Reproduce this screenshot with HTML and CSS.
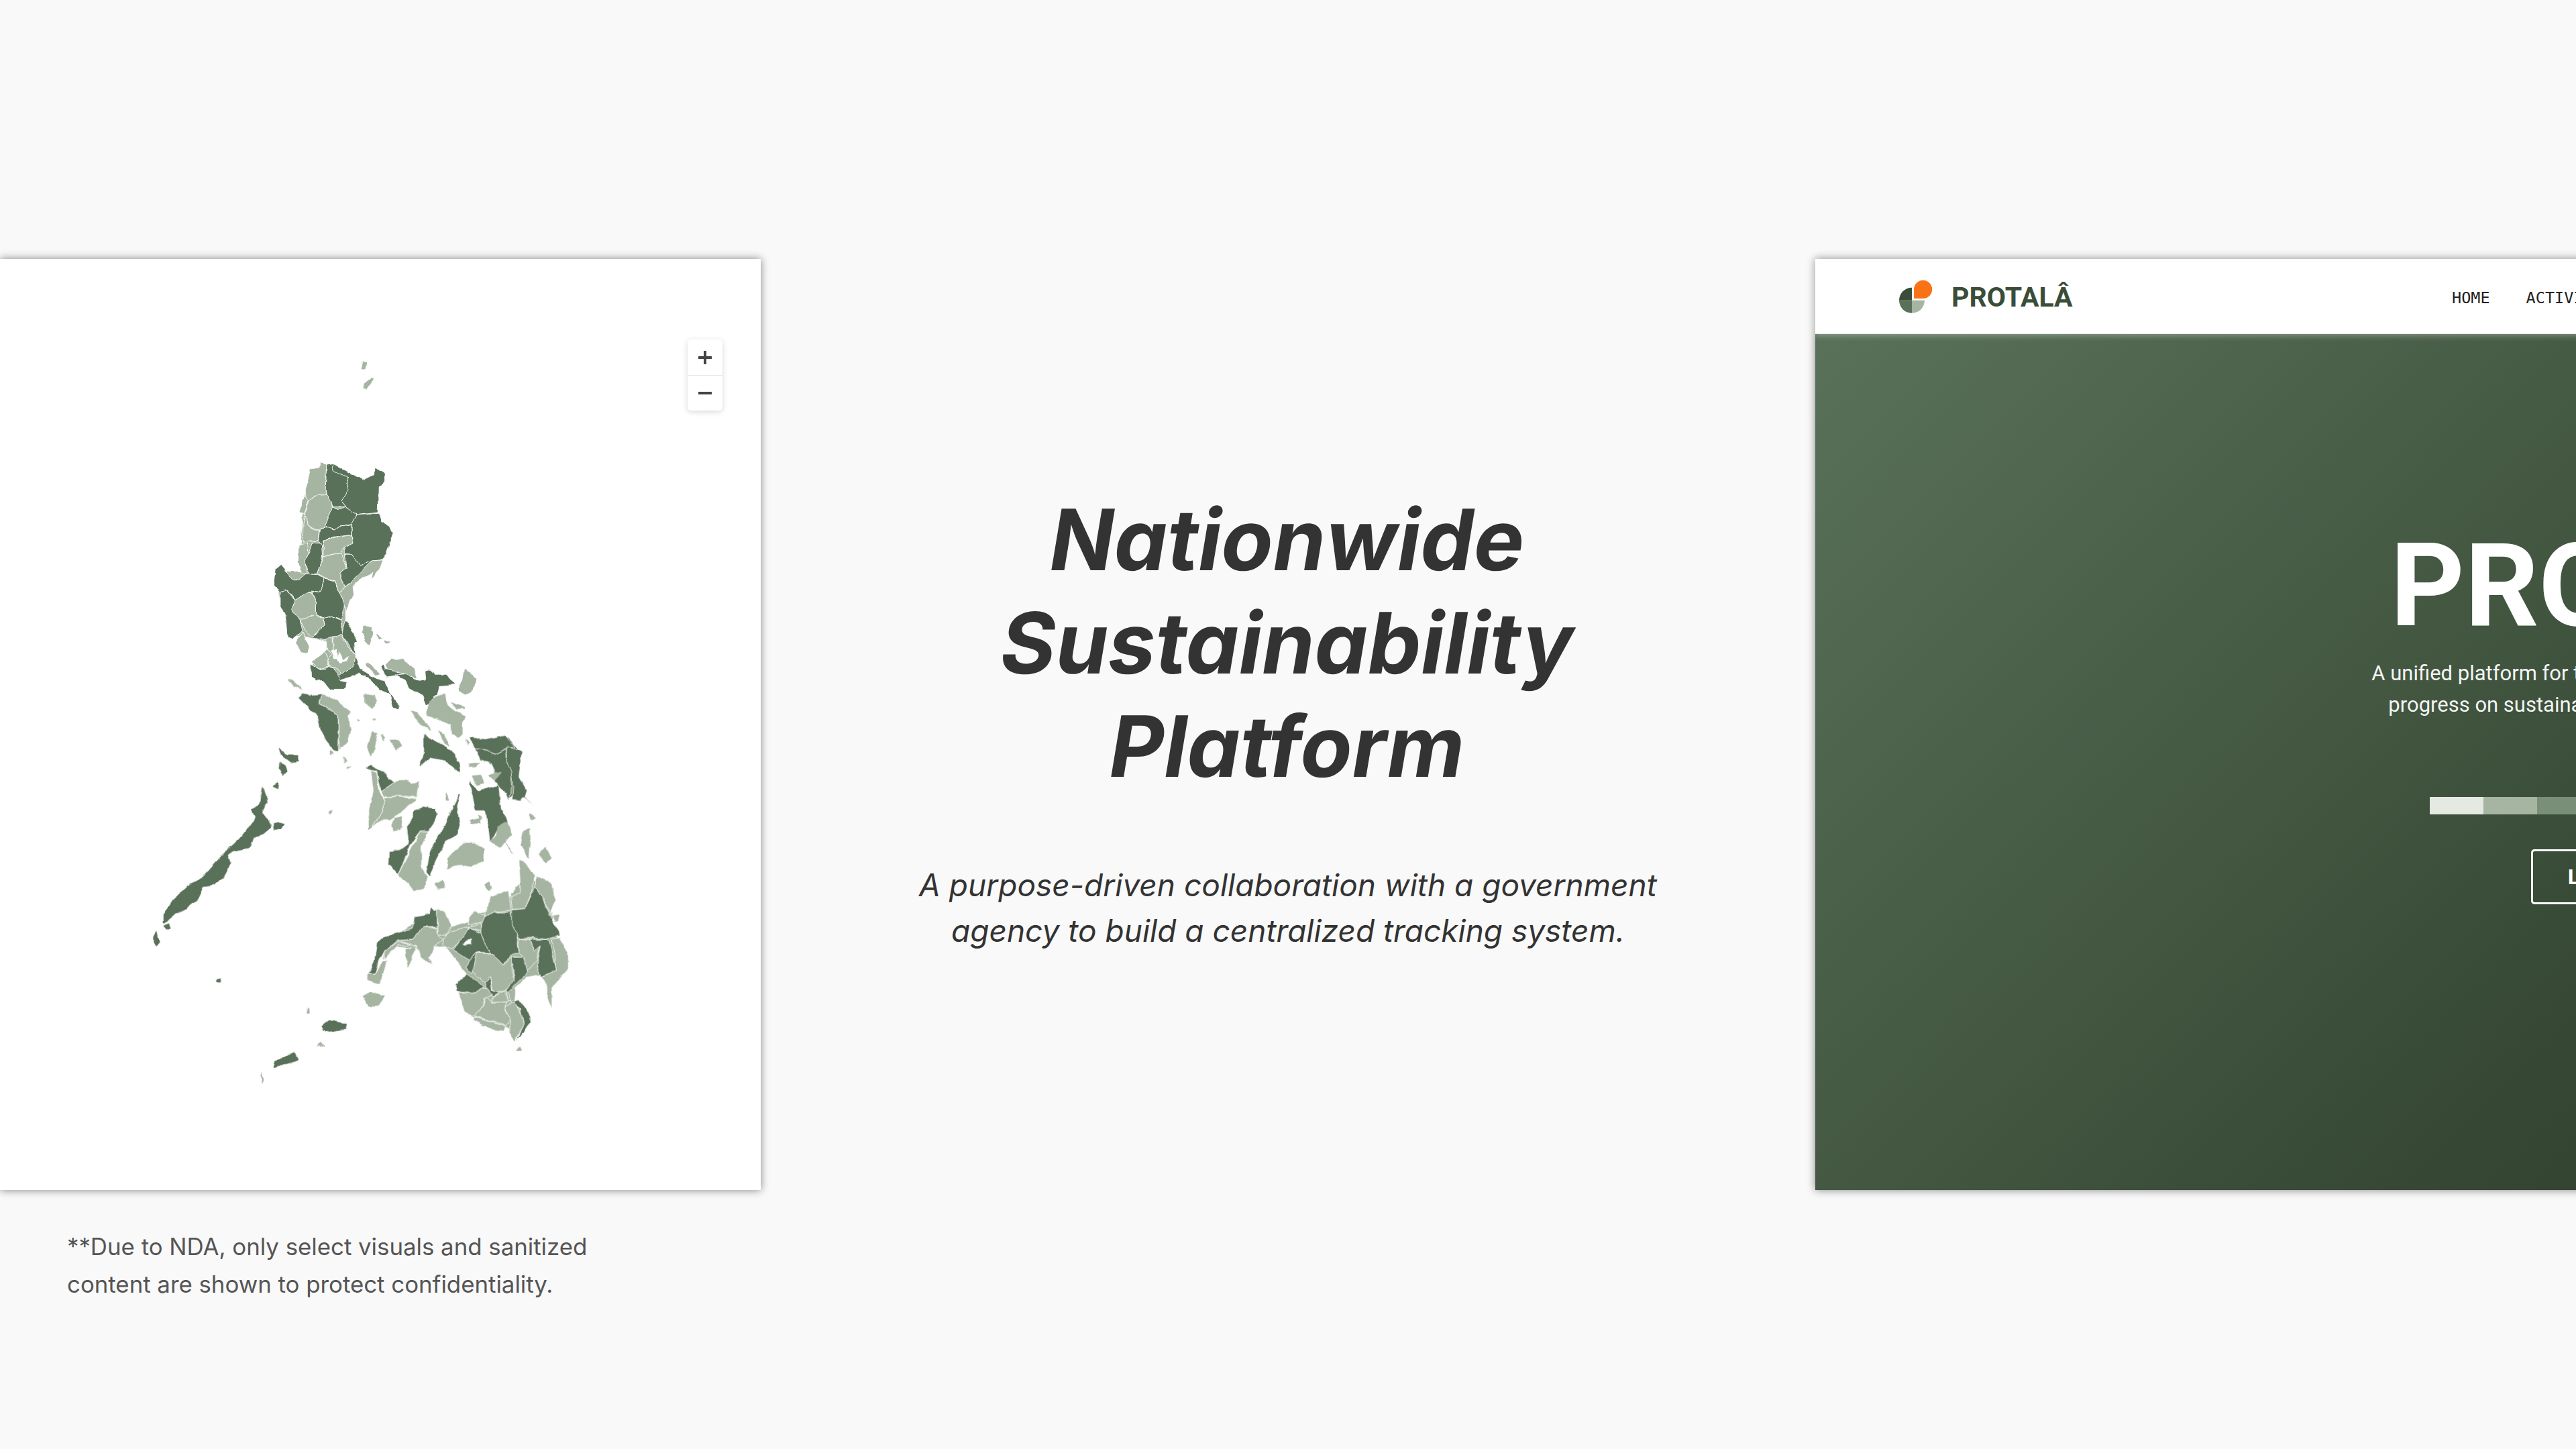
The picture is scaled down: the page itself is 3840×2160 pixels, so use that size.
FILE: index.html
```html
<!DOCTYPE html>
<html lang="en">
<head>
<meta charset="utf-8">
<title>Nationwide Sustainability Platform</title>
<link rel="stylesheet" href="styles.css">
</head>
<body>
<main class="stage">
  <section class="card map-card">
    <svg class="map" viewBox="0 386 1134 1388" aria-label="Map of the Philippines">
      <defs>
        <filter id="coast" filterUnits="userSpaceOnUse" x="0" y="386" width="1134" height="1388" color-interpolation-filters="sRGB">
          <feTurbulence type="fractalNoise" baseFrequency=".07" numOctaves="3" seed="4" result="noise"/>
          <feDisplacementMap in="SourceGraphic" in2="noise" scale="5" xChannelSelector="R" yChannelSelector="G"/>
          <feGaussianBlur stdDeviation=".45"/>
        </filter>
      </defs>
      <g class="provinces">
      <g transform="translate(150 500) scale(.5102 .3827)">
        <path class="u" d="M625,530 655,515 700,530 770,575 805,580 805,700 840,760 820,860 790,900 730,990 715,1050 715,1110 740,1190 745,1260 700,1330 620,1310 620,1275 680,1200 590,1170 550,1170 535,1060 520,1000 520,920 590,920 585,820 590,700 600,600z"/>
        <path class="l plain" d="M763,130 768,105 775,107 772,130zM768,208 770,192 794,167 790,187 776,208z"/>
        <path class="l" d="M610,520 640,515 645,497 660,505 657,610 660,620 635,622 610,650 600,632 598,600 608,560z"/>
        <path class="l" d="M595,630 608,640 596,695 605,705 603,735 625,758 638,758 635,800 590,805 592,730 598,700 580,690 590,650z"/>
        <path class="l" d="M578,815 605,810 608,850 598,875 602,928 585,925 577,880z"/>
        <path class="d" d="M660,505 680,500 700,520 722,548 726,600 702,645 715,668 680,668 660,625 657,600z"/>
        <path class="d" d="M680,500 720,530 770,562 795,545 805,515 812,520 830,540 830,570 812,590 810,690 745,700 716,668 702,645 722,600 724,550 675,525z"/>
        <path class="l" d="M597,695 610,640 635,620 660,618 675,650 678,685 660,740 640,758 625,755 605,735z"/>
        <path class="d" d="M678,668 690,678 715,668 747,700 735,740 705,738 685,757 655,745 672,690z"/>
        <path class="d" d="M655,745 685,758 705,738 733,742 733,778 680,785 650,800 652,822 635,800 640,755z"/>
        <path class="d" d="M747,700 815,693 822,725 845,740 855,768 835,850 822,872 795,875 757,897 733,855 712,853 712,825 735,810 733,742z"/>
        <path class="l" d="M652,800 680,787 733,778 737,810 712,825 705,845 650,862z"/>
        <path class="d" d="M620,808 645,810 648,860 640,900 632,928 608,932 596,880 612,840z"/>
        <path class="l" d="M650,862 705,845 712,885 718,905 702,925 702,950 718,978 700,1005 685,960 652,945 632,930z"/>
        <path class="d" d="M712,855 733,855 757,897 795,875 770,915 715,978 702,950 702,925 718,905z"/>
        <path class="l" d="M795,875 822,872 815,910 790,955 795,925 760,950 737,975 740,1010 718,1070 708,1050 698,1005 720,975z"/>
        <path class="d" d="M510,910 525,893 532,905 545,925 560,955 580,950 600,928 632,932 652,948 650,975 640,1000 615,993 600,1005 570,1032 548,993 525,1000 505,975z"/>
        <path class="d" d="M525,1000 545,992 567,1032 558,1062 582,1105 590,1150 560,1183 545,1175 540,1090 525,1060z"/>
        <path class="l" d="M567,1032 605,1000 615,1000 630,1040 630,1090 582,1105 557,1065z"/>
        <path class="d" d="M650,948 685,960 700,1005 710,1050 705,1105 675,1095 650,1105 630,1088 630,1040 615,995 640,1000 650,975z"/>
        <path class="l" d="M582,1105 625,1090 650,1107 655,1125 618,1175 598,1150z"/>
        <path class="d" d="M650,1105 675,1095 705,1110 705,1165 665,1190 618,1178 655,1125z"/>
        <path class="l" d="M590,1155 610,1215 605,1240 585,1235 570,1195z"/>
        <path class="d" d="M715,1105 735,1150 752,1190 742,1200 745,1250 760,1300 810,1340 830,1345 842,1390 875,1440 870,1458 855,1450 845,1400 815,1380 785,1335 755,1320 695,1345 690,1330 735,1290 745,1250 705,1165z"/>
        <path class="l plain" d="M770,1135 790,1135 795,1160 785,1205 775,1190 765,1155zM805,1165 820,1180 815,1185zM830,1190 845,1192 835,1196z"/>
        <path class="l" d="M660,1185 678,1175 680,1225 668,1235 660,1215z"/>
        <path class="l" d="M680,1175 705,1165 722,1215 745,1250 740,1285 705,1320 690,1295 668,1285 665,1260 680,1225z"/>
        <path class="w" d="M672,1225 690,1225 695,1260 680,1260zM698,1230 708,1265 725,1250 715,1270 700,1275 690,1265z"/>
        <path class="l" d="M615,1270 655,1235 668,1290 640,1302z"/>
        <path class="d" d="M612,1280 640,1302 660,1300 668,1290 682,1292 698,1345 720,1350 712,1378 670,1378 650,1345 630,1345 612,1320z"/>
        <path class="l plain" d="M780,1275 815,1320 805,1320 778,1285z"/>
        <path class="l" d="M830,1285 850,1258 885,1262 920,1300 925,1340 885,1315 850,1320 835,1300z"/>
        <path class="d" d="M815,1290 825,1280 830,1300 885,1315 860,1325 840,1330z"/>
        <path class="d" d="M860,1320 895,1315 925,1345 950,1340 948,1305 960,1300 975,1320 1010,1320 1035,1360 990,1365 985,1400 950,1440 940,1405 900,1375 890,1340z"/>
        <path class="l plain" d="M1065,1300 1082,1320 1095,1340 1085,1385 1065,1395 1047,1380 1060,1340z"/>
      </g>
      <g transform="translate(200 1000) scale(.4464 .4146)">
        <path class="u" d="M940,900 1010,880 1060,920 1120,900 1130,870 1190,870 1200,820 1255,810 1290,760 1330,750 1380,790 1395,880 1410,960 1440,1030 1430,1090 1385,1130 1370,1090 1310,1100 1270,1140 1270,1200 1310,1240 1290,1300 1240,1280 1130,1240 1090,1170 1090,1130 1110,1090 1040,990 950,1000 860,990 830,1040 840,980z"/>
        <path class="ud" d="M1130,250 1250,240 1285,290 1270,440 1255,460 1215,400 1195,340 1150,300z"/>
        <path class="d" d="M548,95 560,82 590,88 630,85 615,118 682,157 680,290 665,283 640,250 620,205 612,165 575,125z"/>
        <path class="l" d="M630,85 680,105 695,125 725,150 715,165 725,215 715,255 682,285 682,157 615,118z"/>
        <path class="l plain" d="M515,30 530,38 548,55 560,65 535,55zM770,85 800,90 810,105 795,135 770,115zM795,222 810,225 800,290 790,305 780,280zM853,250 880,248 890,270 875,282zM828,230 836,240 830,248z"/>
        <path class="l plain" d="M985,110 1035,85 1050,130 1085,150 1105,165 1095,185 1095,225 1080,240 1060,225 1058,190 1010,170 978,160zM925,145 945,150 985,205 990,215 950,185zM1020,218 1035,230 1050,270 1035,260zM1060,115 1105,135 1080,135z"/>
        <path class="d" d="M772,350 790,340 845,370 850,390 870,400 825,435 810,360 790,358z"/>
        <path class="l" d="M790,358 810,365 820,435 838,470 825,510 790,565 780,575 780,540 798,430z"/>
        <path class="l" d="M825,435 870,400 910,390 925,405 955,395 945,455 925,450 880,450 833,455z"/>
        <path class="l" d="M833,458 880,450 925,455 945,460 890,510 855,535 825,535 790,565 825,510 838,470z"/>
        <path class="l plain" d="M870,530 895,525 890,570 865,575 860,555z"/>
        <path class="d" d="M930,505 965,487 1005,495 1015,515 1000,550 982,578 955,578 925,625 880,735 850,695 852,650 890,645 915,625 908,560 930,530z"/>
        <path class="l" d="M955,578 982,580 960,630 960,700 978,745 965,785 935,795 915,765 880,735 925,640z"/>
        <path class="d plain" d="M1085,445 1075,480 1085,555 1075,590 1040,610 1005,680 985,735 978,725 990,650 1040,555 1065,495z"/>
        <path class="l plain" d="M1100,620 1140,620 1165,640 1165,680 1125,705 1075,695 1045,712 1050,675 1070,650z"/>
        <path class="l plain" d="M1005,765 1030,755 1035,780 1015,785zM1170,768 1185,760 1195,780 1185,790z"/>
        <path class="d plain" d="M1122,400 1135,420 1150,435 1190,420 1215,415 1220,480 1240,530 1245,545 1215,560 1190,610 1185,560 1175,500 1140,500 1130,450z"/>
        <path class="l plain" d="M1215,560 1245,545 1260,590 1245,605 1225,635 1190,615 1210,590zM1240,620 1265,655 1245,630zM1300,580 1318,570 1320,620 1315,670 1293,625zM1355,660 1375,635 1390,670 1375,690 1365,680zM1132,378 1155,375 1165,405 1145,412z"/>
        <path class="d" d="M1118,237 1170,245 1240,232 1270,275 1242,278 1205,300 1175,285 1140,280z"/>
        <path class="d" d="M1140,280 1175,285 1205,300 1240,280 1242,320 1262,360 1258,440 1250,470 1240,440 1205,400 1210,375 1190,330 1155,320z"/>
        <path class="d" d="M1245,272 1295,290 1285,380 1312,430 1305,455 1340,490 1300,455 1290,468 1262,465 1265,420 1258,360 1242,320z"/>
        <path class="d plain" d="M970,232 985,245 1030,270 1060,290 1085,330 1088,365 1040,320 985,310 955,340 970,300z"/>
        <path class="d plain" d="M428,420 435,445 445,460 435,490 425,510 440,530 458,560 430,585 395,600 385,635 335,645 310,660 320,690 295,740 265,770 230,775 210,820 170,855 130,880 100,905 100,880 115,850 130,825 160,795 185,768 215,755 235,735 260,705 290,670 320,635 345,610 375,580 400,540 405,525 395,500 420,480z"/>
        <path class="d plain" d="M485,280 510,305 545,305 550,325 525,330 495,305zM487,335 505,345 510,360 497,375 485,350zM465,415 480,405 478,420zM468,550 485,545 500,550 490,565 470,570zM100,915 115,908 120,925 108,925zM65,960 75,940 82,975 72,988 65,975zM275,1112 288,1108 290,1118 280,1118z"/>
        <path class="l plain" d="M648,508 658,500 655,515zM655,283 665,295 655,298zM710,350 720,345 715,352zM700,310 708,325 702,330zM745,175 750,180 745,182zM800,172 805,175 800,178zM1040,440 1050,462 1040,462zM1120,535 1150,530 1155,545 1125,550zM1150,520 1160,525 1155,535zM1320,515 1340,530 1325,535zM1110,250 1120,262 1115,265zM1120,335 1150,330 1140,345 1120,345zM1185,375 1225,365 1205,395zM425,1445 431,1465 425,1482 427,1465z"/>
        <path class="d" d="M990,850 1005,860 1012,855 1012,922 965,922 930,965 880,970 835,1010 820,1040 805,1088 780,1088 800,1050 810,980 835,955 885,940 930,925 935,885 985,875z"/>
        <path class="l" d="M1012,855 1040,870 1060,915 1045,950 1015,950z"/>
        <path class="l" d="M965,922 1012,925 1015,950 1030,965 1010,985 985,1030 1000,1055 955,1030 945,990 925,985 880,970 930,965z"/>
        <path class="l" d="M905,1000 945,990 925,1040 910,1070z"/>
        <path class="l" d="M835,1010 880,975 925,985 905,990 880,985 850,1020 835,1040z"/>
        <path class="l" d="M830,1045 845,1040 820,1130 800,1125 777,1110 778,1088 805,1088z"/>
        <path class="l plain" d="M765,1170 790,1155 835,1170 825,1185 810,1205 785,1205z"/>
        <path class="d plain" d="M628,1275 650,1258 680,1265 708,1270 705,1285 680,1290 655,1295 635,1290z"/>
        <path class="d plain" d="M465,1423 470,1405 500,1395 520,1380 535,1373 545,1400 520,1408 495,1415z"/>
        <path class="l plain" d="M625,1338 632,1350 612,1348zM580,1215 585,1230 575,1232zM1275,1365 1290,1350 1295,1365z"/>
        <path class="l" d="M1030,965 1060,935 1115,920 1118,945 1085,975 1060,1000 1030,985z"/>
        <path class="l" d="M1115,920 1155,910 1165,935 1120,925z"/>
        <path class="l" d="M1118,890 1135,865 1175,880 1165,905 1115,910z"/>
        <path class="l" d="M1190,810 1250,790 1258,860 1200,868 1170,885z"/>
        <path class="l" d="M1258,810 1290,795 1285,680 1300,680 1335,735 1330,790 1305,855 1262,858z"/>
        <path class="l" d="M1340,735 1390,760 1410,820 1385,880 1420,875 1420,900 1405,900 1365,820 1340,775z"/>
        <path class="d" d="M1120,925 1160,945 1180,1000 1190,1015 1145,1010 1120,1040 1065,1005 1085,975z"/>
        <path class="w" d="M1095,985 1125,960 1125,985z"/>
        <path class="d" d="M1170,885 1200,868 1255,868 1275,920 1285,1015 1260,1025 1230,1053 1190,1015 1180,1000 1160,945 1160,915z"/>
        <path class="d" d="M1260,860 1305,855 1340,775 1365,820 1390,885 1415,925 1420,952 1375,965 1325,960 1285,963 1260,905z"/>
        <path class="l" d="M1395,965 1420,960 1450,1020 1450,1075 1420,1110 1395,1140 1395,1215 1380,1180 1378,1135 1360,1100 1408,1075 1405,1020z"/>
        <path class="d" d="M1320,965 1385,968 1410,1075 1358,1100 1345,1060 1358,990 1335,1008z"/>
        <path class="l" d="M1285,965 1320,965 1335,1008 1355,990 1345,1040 1310,1080 1295,1025 1285,1015z"/>
        <path class="d" d="M1262,1030 1300,1030 1315,1085 1275,1125 1250,1155 1255,1190 1285,1180 1320,1230 1322,1265 1275,1335 1300,1265 1290,1215 1250,1185 1245,1145 1270,1100 1262,1070z"/>
        <path class="l" d="M1145,1012 1190,1015 1232,1055 1262,1030 1260,1080 1270,1110 1240,1150 1200,1160 1190,1100 1170,1120 1145,1100 1135,1085 1125,1075z"/>
        <path class="d" d="M1120,1040 1145,1012 1135,1060 1128,1090 1110,1070z"/>
        <path class="d" d="M1075,1125 1110,1090 1145,1115 1165,1135 1140,1160 1090,1155 1075,1150z"/>
        <path class="d" d="M1170,1120 1190,1100 1195,1150 1220,1158 1195,1172 1175,1140z"/>
        <path class="l" d="M1082,1155 1140,1160 1160,1140 1180,1142 1195,1165 1170,1180 1165,1200 1135,1250 1105,1225z"/>
        <path class="l" d="M1175,1175 1195,1190 1245,1190 1235,1215 1260,1255 1240,1275 1135,1240 1165,1205z"/>
        <path class="l" d="M1195,1175 1240,1150 1250,1190 1195,1192z"/>
        <path class="l" d="M1135,1245 1240,1278 1235,1295 1190,1290 1130,1255z"/>
        <path class="l" d="M1235,1210 1270,1190 1295,1240 1300,1270 1270,1335 1250,1300 1260,1260z"/>
      </g>
      </g>
    </svg>
    <div class="zoom-controls">
      <div class="zoom-btn"><svg viewBox="0 0 20 20" class="zoom-icon"><path d="M1 10H19M10 1V19"/></svg></div>
      <div class="zoom-btn"><svg viewBox="0 0 20 20" class="zoom-icon"><path d="M1 10H19"/></svg></div>
    </div>
  </section>

  <section class="intro">
    <h1 class="intro-title"><span class="intro-line">Nationwide</span> <span class="intro-line">Sustainability</span> <span class="intro-line">Platform</span></h1>
    <p class="intro-text">A purpose-driven collaboration with a government<br>agency to build a centralized tracking system.</p>
  </section>

  <section class="card site-card">
    <header class="site-header">
      <div class="brand">
        <svg class="brand-mark" viewBox="0 0 50 50">
          <path fill="#3a4d38" d="M0,30.700A19,19 0 0 1 19,11.700V30.700z"/>
          <path fill="#5a7159" d="M0,30.700H19V49.700A19,19 0 0 1 0,30.700z"/>
          <path fill="#a6b5a2" d="M19,30.700H38A19,19 0 0 1 19,49.700z"/>
          <path fill="#f97316" stroke="#fff" stroke-width="1.500" d="M21.300,28.700V14.300A14.300,14.300 0 1 1 35.700,28.700z"/>
        </svg>
        <span class="brand-name">PROTALÂ</span>
      </div>
      <nav class="site-nav"><span>HOME</span><span>ACTIVITIES</span></nav>
    </header>
    <div class="hero">
      <h2 class="hero-title">PROTALÂ</h2>
      <p class="hero-text">A unified platform for tracking, monitoring, and showcasing<br>progress on sustainability initiatives across the country.</p>
      <div class="swatches">
        <i class="s1"></i><i class="s2"></i><i class="s3"></i><i class="s4"></i><i class="s5"></i><i class="s6"></i><i class="s7"></i><i class="s8"></i>
      </div>
      <span class="hero-button">LEARN MORE</span>
    </div>
  </section>

  <p class="note">**Due to NDA, only select visuals and sanitized<br>content are shown to protect confidentiality.</p>
</main>
</body>
</html>
```

FILE: styles.css
```css
* { box-sizing: border-box; }
html, body { margin: 0; background: #f9f9f9; }
.stage {
  width: 3840px;
  height: 2160px;
  overflow: hidden;
  display: grid;
  grid-template-columns: 1134px 1572px 1134px;
  grid-template-rows: 386px 1388px 1fr;
  font-family: Inter, "Liberation Sans", sans-serif;
}
.card { box-shadow: 0 0 12px rgba(0,0,0,.48); background: #fff; }
.map-card { grid-column: 1; grid-row: 2; position: relative; }
.map { display: block; width: 1134px; height: 1388px; }
.provinces { filter: url(#coast); }
.d, .l { stroke: #fff; stroke-width: .9px; vector-effect: non-scaling-stroke; stroke-linejoin: round; }
.d, .ud { fill: #5a7159; }
.l, .u { fill: #a6b5a2; }
.w { fill: #fff; }
.d.plain { stroke: #5a7159; stroke-width: 1.800px; }
.l.plain { stroke: #a6b5a2; stroke-width: 1.400px; }
.zoom-controls {
  position: absolute;
  top: 120px;
  left: 1025px;
  width: 52px;
  border-radius: 5px;
  background: #fff;
  box-shadow: 0 2px 8px rgba(0,0,0,.16);
}
.zoom-btn { height: 53px; display: flex; align-items: center; justify-content: center; }
.zoom-btn + .zoom-btn { border-top: 1px solid #e6e6e6; }
.zoom-icon { width: 20px; height: 20px; fill: none; stroke: #444; stroke-width: 4; stroke-linecap: round; }

.intro {
  grid-column: 2;
  grid-row: 2;
  display: flex;
  flex-direction: column;
  align-items: center;
  justify-content: center;
  padding-bottom: 12px;
  text-align: center;
  color: #333;
  font-feature-settings: "cv11";
}
.intro-title {
  margin: 0;
  font-size: 126px;
  line-height: 154px;
  font-weight: 700;
}
.intro-line { display: block; transform: skewX(-9.400deg); }
.intro-text {
  margin: 96px 0 0;
  font-size: 46px;
  line-height: 68px;
  font-style: italic;
  font-weight: 400;
}
.note {
  grid-column: 1 / span 2;
  grid-row: 3;
  margin: 0;
  padding: 56px 0 0 100px;
  font-size: 34.800px;
  line-height: 56px;
  color: #555;
}

.site-card { grid-column: 3; grid-row: 2; width: 2472px; display: flex; flex-direction: column; }
.site-header {
  height: 112px;
  flex: none;
  display: flex;
  align-items: center;
  justify-content: space-between;
  padding: 0 0 0 125px;
  position: relative;
  border-bottom: 1px solid #e8e8e8;
  box-shadow: 0 2px 9px rgba(255,255,255,.35);
}
.brand { display: flex; align-items: center; gap: 28px; }
.brand-mark { width: 50px; height: 50px; }
.brand-name { font-family: Roboto, sans-serif; font-weight: 700; font-size: 41px; padding-top: 2px; color: #3a4d38; }
.site-nav {
  position: absolute;
  left: 949px;
  top: 2px;
  height: 112px;
  display: flex;
  align-items: center;
  gap: 54px;
  font-family: "DejaVu Sans Mono", monospace;
  font-size: 23.500px;
  color: #222;
}
.hero {
  flex: 1;
  display: flex;
  flex-direction: column;
  align-items: center;
  padding-top: 289px;
  background: linear-gradient(135deg, #5a7159 0%, #3a4d38 50%, #232f22 100%);
  color: #fff;
  font-family: Roboto, sans-serif;
}
.hero-title { margin: 0; font-size: 172px; line-height: 172px; font-weight: 700; }
.hero-text { margin: 22px 0 0; font-size: 31px; line-height: 46.500px; text-align: center; color: #f3f4f3; }
.swatches { display: flex; margin-top: 114px; }
.swatches i { display: block; width: 80px; height: 26px; }
.s1 { background: #e4e9e2; }
.s2 { background: #a6b5a2; }
.s3 { background: #7a8f77; }
.s4 { background: #5a7159; }
.s5 { background: #3a4d38; }
.s6 { background: #5a7159; }
.s7 { background: #7a8f77; }
.s8 { background: #a6b5a2; }
.hero-button {
  margin-top: 52px;
  width: 338px;
  height: 82px;
  display: flex;
  align-items: center;
  justify-content: center;
  border: 3px solid #fff;
  border-radius: 5px;
  font-size: 32px;
  font-weight: 700;
  letter-spacing: 3.200px;
}
```
